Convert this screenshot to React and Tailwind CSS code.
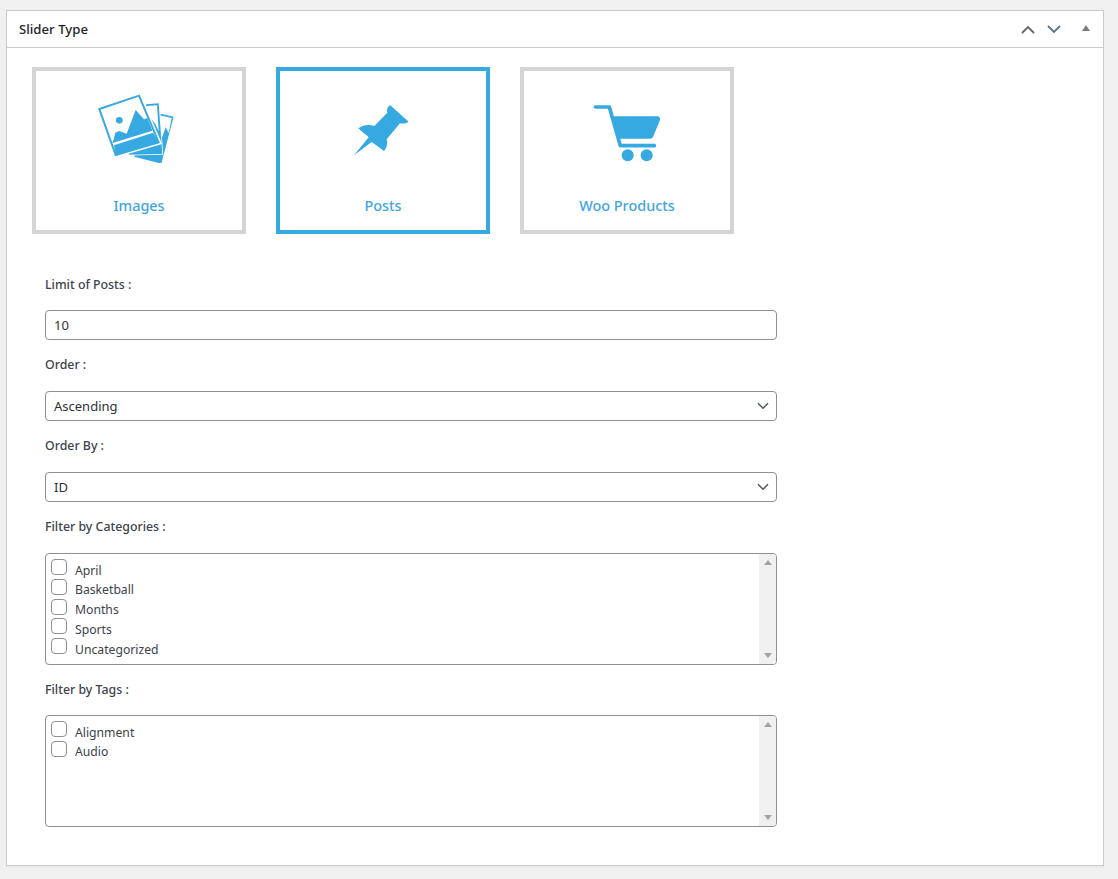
import React from "react";

function Frame({ children, viewBox }) {
  return (
    <svg viewBox={viewBox} className="w-[90px] h-[70px] mx-auto block" fill="#36a9e1">
      {children}
    </svg>
  );
}

function ImagesIcon() {
  return (
    <Frame viewBox="282 279 270 210">
      {/* back card */}
      <path d="M483 341 L521 350 L484 491 L402 470 Z" />
      <path d="M478 346 L515 354 L506 399 L497 382 L487 410 L465 410 Z" fill="#fff" />
      {/* middle card */}
      <path d="M439 313 L476 310 L487 462 L386 464 Z" stroke="#fff" strokeWidth="5" paintOrder="stroke" />
      <path d="M434 319 L471 316 L476 394 L466 372 L452 354 L430 345 Z" fill="#fff" />
      {/* front card */}
      <path d="M298 327 L417 287 L476 427 L347 465 Z" fill="#fff" stroke="#fff" strokeWidth="15" />
      <path d="M298 327 L417 287 L476 427 L347 465 Z" fill="#fff" stroke="#36a9e1" strokeWidth="6" />
      <path d="M338 429 L346 398 L358 393 L380 401 L407 330 L432 358 L442 354 L457 392 Z" />
      <path d="M342 436 L459 398 L477 428 L347 466 Z" />
      <circle cx="358" cy="361" r="10" />
    </Frame>
  );
}

function PinIcon() {
  return (
    <Frame viewBox="204 99 270 210">
      <path d="M252 286 L296 232 C286 222 274 214 265 205 C278 195 296 192 313 198 L352 158 C349 150 352 142 360 135 L416 185 C408 190 400 192 390 190 L350 238 C354 250 350 264 342 273 L305 246 Z" />
    </Frame>
  );
}

function CartIcon() {
  return (
    <Frame viewBox="201 99 270 210">
      <path d="M241 141 L283 141 L316 257 L418 257" fill="none" stroke="#36a9e1" strokeWidth="11" strokeLinecap="round" strokeLinejoin="round" />
      <path d="M294 169 L428 169 Q436 170 435 180 L414 231 Q412 236 406 236 L308 236 Z" />
      <circle cx="338" cy="286" r="18" />
      <circle cx="395" cy="286" r="18" />
    </Frame>
  );
}

function Card({ label, active, children }) {
  return (
    <div
      className={
        "w-[214px] h-[167px] border-4 bg-white pt-[22px] " +
        (active ? "border-[#36a9e1]" : "border-[#d3d4d6]")
      }
    >
      {children}
      <div className="mt-[32px] h-5 pt-px leading-5 text-center text-[14.4px] font-medium text-[#3fa5e3]">{label}</div>
    </div>
  );
}

function Label({ children, className }) {
  return (
    <div className={"h-5 pt-px leading-5 text-[12.35px] font-medium text-[#3c434a] " + className}>{children}</div>
  );
}

function Select({ value }) {
  return (
    <div className="h-[30px] w-[732px] border border-[#8c8f94] rounded-[4px] bg-white flex items-center justify-between pl-[8px] pr-[7px] text-[13px] text-[#2c3338]">
      <span className="pt-px">{value}</span>
      <svg viewBox="0 0 12 8" className="w-[12px] h-[8px]" fill="none" stroke="#50575e" strokeWidth="1.5">
        <path d="M1 1.2 L6 6.2 L11 1.2" />
      </svg>
    </div>
  );
}

function ListBox({ items }) {
  return (
    <div className="h-[112px] w-[732px] border border-[#8c8f94] rounded-[4px] bg-white flex overflow-hidden">
      <div className="flex-1 pl-[5px] pt-[5px] flex flex-col">
        {items.map((t) => (
          <div key={t} className="h-[19.8px] flex items-start text-[12.2px] text-[#3c434a]">
            <span className="w-4 h-4 border border-[#8c8f94] rounded-[4px] bg-white shrink-0" />
            <span className="ml-[8px] leading-[20px] mt-[1.6px]">{t}</span>
          </div>
        ))}
      </div>
      <div className="w-[17px] bg-[#f0f0f0] flex flex-col items-center justify-between py-[6px]">
        <svg viewBox="0 0 8 5" className="w-2 h-[5px]" fill="#a3a3a3"><path d="M4 0 L8 5 L0 5 Z" /></svg>
        <svg viewBox="0 0 8 5" className="w-2 h-[5px]" fill="#a3a3a3"><path d="M0 0 L8 0 L4 5 Z" /></svg>
      </div>
    </div>
  );
}

export default function App() {
  return (
    <div className="min-h-screen bg-[#f0f0f1] pt-[10px] pb-[13px] pl-[6px] pr-[14px] font-['Noto_Sans','Open_Sans',sans-serif]">
      <div className="h-[856px] border border-[#c9cacc] bg-white shadow-[0_1px_1px_rgba(0,0,0,0.04)]">
        <div className="h-[37px] border-b border-[#c9cacc] flex items-center pl-[12px] pr-[13px]">
          <h2 className="pt-px text-[13.2px] font-medium text-[#1d2327]">Slider Type</h2>
          <div className="ml-auto flex items-center">
            <svg viewBox="0 0 14 9" className="w-[14px] h-[9px] text-[#5f666d]" fill="none" stroke="currentColor" strokeWidth="1.8">
              <path d="M1 8 L7 2 L13 8" />
            </svg>
            <svg viewBox="0 0 14 9" className="w-[14px] h-[9px] ml-[12px] text-[#5d7389]" fill="none" stroke="currentColor" strokeWidth="1.8">
              <path d="M1 1 L7 7 L13 1" />
            </svg>
            <svg viewBox="0 0 8 6" className="w-[8px] h-[6px] ml-[21px] mb-[2px]" fill="#787c82">
              <path d="M4 0 L8 6 L0 6 Z" />
            </svg>
          </div>
        </div>

        <div className="pt-[19px] pl-[25px] flex gap-[30px]">
          <Card label="Images"><ImagesIcon /></Card>
          <Card label="Posts" active><PinIcon /></Card>
          <Card label="Woo Products"><CartIcon /></Card>
        </div>

        <div className="pl-[38px] pt-[40px]">
          <Label className="mb-[16px]">Limit of Posts :</Label>
          <div className="h-[30px] w-[732px] border border-[#8c8f94] rounded-[4px] bg-white flex items-center pl-[8px] pt-px text-[13px] text-[#2c3338]">10</div>
          <Label className="mt-[14px] mb-[17px]">Order :</Label>
          <Select value="Ascending" />
          <Label className="mt-[14px] mb-[17px]">Order By :</Label>
          <Select value="ID" />
          <Label className="mt-[14px] mb-[17px]">Filter by Categories :</Label>
          <ListBox items={["April", "Basketball", "Months", "Sports", "Uncategorized"]} />
          <Label className="mt-[14px] mb-[16px]">Filter by Tags :</Label>
          <ListBox items={["Alignment", "Audio"]} />
        </div>
      </div>
    </div>
  );
}
